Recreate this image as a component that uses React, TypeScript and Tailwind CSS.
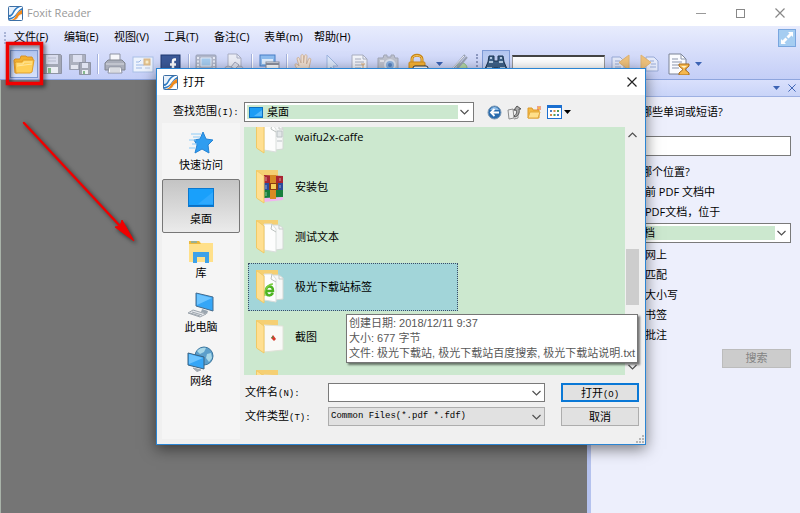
import type { ReactNode } from 'react';
import clsx from 'clsx';

const MONO = "font-['Liberation_Mono','Noto_Sans_CJK_SC',monospace] text-[9px]";

function BrandIcon() {
  return (
    <svg width="15" height="15" viewBox="0 0 15 15" aria-hidden="true">
      <rect x="0.5" y="0.5" width="14" height="14" rx="1" fill="#e9f1fa" stroke="#3c6fa5" />
      <path d="M1 14V9c4 0 3-5 8-8h5v3c-6 1-4 8-13 10z" fill="#2f7cc4" />
      <path d="M1 11c5 0 4-7 11-10h2v1C8 5 9 11 1 12z" fill="#fff" />
      <path d="M3 14c6-1 3-7 11-10v4c-5 1-3 5-8 6z" fill="#f18a1c" />
      <path d="M8 14c3-1 3-4 6-5v5z" fill="#fff" />
    </svg>
  );
}

function Chevron({ up = false }: { up?: boolean }) {
  return (
    <svg width="9" height="6" viewBox="0 0 9 6" fill="none" stroke="#505050" strokeWidth="1.2" aria-hidden="true">
      <path d={up ? 'M0.5 5 4.5 1l4 4' : 'M0.5 1l4 4 4-4'} />
    </svg>
  );
}

function Caret({ color = '#3c63b4' }: { color?: string }) {
  return (
    <svg width="7" height="4" viewBox="0 0 7 4" aria-hidden="true">
      <path d="M0 0h7L3.5 4z" fill={color} />
    </svg>
  );
}

function Cross({ color, size = 10 }: { color: string; size?: number }) {
  return (
    <svg width={size} height={size} viewBox="0 0 10 10" stroke={color} strokeWidth="1.2" aria-hidden="true">
      <path d="M0.5 0.5l9 9M9.5 0.5l-9 9" />
    </svg>
  );
}

function Svg({ children, w = 22, h = 22 }: { children: ReactNode; w?: number; h?: number }) {
  return (
    <svg width={w} height={h} viewBox={`0 0 ${w} ${h}`} fill="none" aria-hidden="true">
      {children}
    </svg>
  );
}

const icons = {
  open: (
    <Svg>
      <path d="M1 8V7l1-1h5l1-3h5l1 1h5l1 2v4L4 20H2z" fill="#f3b02e" stroke="#d9912a" />
      <path d="M3 20 2 10l1-1h6l1-2h11l-2 12-2 1z" fill="#ffcf57" stroke="#e09f2c" />
      <path d="M4 11h6l1-2h8M4 13l15-2" stroke="#ffe79c" />
    </Svg>
  ),
  save: (
    <Svg>
      <path d="M1.500 1.500h18l1 1v18H2.500l-1-1z" fill="#a3a7b5" stroke="#8e93a4" />
      <path d="M5 2h12v9H5z" fill="#d9dced" />
      <path d="M7 5h8M7 8h8" stroke="#b6bbce" />
      <path d="M6 14h11v6H6z" fill="#eceef5" />
      <path d="M7 15h3v5H7z" fill="#86b98e" />
    </Svg>
  ),
  saveAll: (
    <Svg>
      <path d="M0.500 1.500h16v15h-16z" fill="#adb1bf" stroke="#999eb0" />
      <path d="M4 2h9v7H4z" fill="#dde0f0" />
      <path d="M2 12h7v4H2z" fill="#e4e6f0" />
      <path d="M10.500 9.500h11v12h-11z" fill="#a3a7b5" stroke="#8e93a4" />
      <path d="M13 10h6v5h-6z" fill="#dfe2f0" />
      <path d="M13 17h6v4h-6z" fill="#eceef5" />
      <path d="M14 18h2v3h-2z" fill="#86b98e" />
    </Svg>
  ),
  print: (
    <Svg>
      <path d="M6 1h10v8H6z" fill="#f7f8fb" stroke="#8e93a2" />
      <path d="M1 10l3-3h14l3 3v7H1z" fill="#a9adb9" stroke="#80858f" />
      <path d="M2 11h18" stroke="#d9dbe2" />
      <path d="M5 14h12l1 6H4z" fill="#fff" stroke="#8e93a2" />
      <path d="M6 16h10M6 18h10" stroke="#b4b8c4" />
    </Svg>
  ),
  mail: (
    <Svg>
      <rect x="1" y="4" width="20" height="15" fill="#edf3fd" stroke="#a9bfe6" />
      <path d="M4 9h3l2-2M4 12h8M4 15h6" stroke="#9db9e6" />
      <rect x="12" y="6" width="6" height="6" fill="#e5c58e" stroke="#d5b48a" />
      <circle cx="15" cy="9" r="1.500" fill="#f7eccd" />
      <path d="M13 15h5" stroke="#b7c6e0" />
    </Svg>
  ),
  facebook: (
    <Svg>
      <rect x="1" y="2" width="19" height="19" fill="#3b5998" stroke="#1f3870" />
      <path d="M2 16h17v4H2z" fill="#6d84b4" />
      <path d="M16 6.500h-1.500c-1.200 0-1.500.8-1.500 2V20M10 11.500h6" stroke="#fff" strokeWidth="2.500" />
    </Svg>
  ),
  film: (
    <Svg>
      <rect x="1" y="2" width="20" height="14" rx="1" fill="#b3b9cc" stroke="#99a1b8" />
      <path d="M6 5h10v8H6z" fill="#a6cdf0" stroke="#e3ecfa" />
      <path d="M3 4v11M19 4v11" stroke="#e8ebf6" strokeWidth="2" strokeDasharray="2 1.500" />
    </Svg>
  ),
  sign: (
    <Svg>
      <path d="M5 1h9l4 4v16H5z" fill="#eceef7" stroke="#a9aec4" />
      <path d="M14 1v4h4" stroke="#a9aec4" />
      <path d="M1 17c0-4 6-5 8-2h4c3-4 8-1 8 2l-4 3-5-3h-3l-4 3z" fill="#c9cddd" stroke="#a0a5ba" />
      <path d="M8 14l4-5 4 3-4 4z" fill="#dfe2ee" stroke="#a0a5ba" />
    </Svg>
  ),
  windows: (
    <Svg>
      <rect x="2" y="2" width="15" height="11" fill="#8ebdf0" stroke="#487fc5" />
      <path d="M4 6h11v5H4z" fill="#e1eefe" />
      <rect x="8" y="9" width="13" height="10" fill="#fbfcff" stroke="#8b919f" />
      <path d="M8 11h13" stroke="#8b919f" strokeWidth="2" />
    </Svg>
  ),
  hand: (
    <Svg>
      <path
        d="M7 20c-1-3-5-6-5-8s2-1.500 4 1L4 6c0-2 2-2 2.500-.5L8 10V3c0-2 2.500-2 2.500 0v7l1-7c.3-2 2.500-1.500 2.500 0l-.5 8 2-5c.7-1.500 2.500-1 2.300.8L16 15l-2 5z"
        fill="#f1e0d2"
        stroke="#cfb59f"
      />
    </Svg>
  ),
  cursor: (
    <Svg>
      <path d="M6 2v16l4-4 3 6 2-1-3-6h5z" fill="#dce7fa" stroke="#9db4de" />
    </Svg>
  ),
  selectText: (
    <Svg>
      <path d="M3 2h11l4 4v15H3z" fill="#f3f5fb" stroke="#a9aec0" />
      <path d="M14 2v4h4M6 6h6M6 9h9M6 12h9M6 15h6" stroke="#a9aec0" />
      <path d="M12 11h4M14 11v7" stroke="#d8ac78" />
    </Svg>
  ),
  camera: (
    <Svg>
      <path d="M1 5h5l1-3h3v2h4V2h3l1 3h3v14H1z" fill="#bfc3cf" stroke="#a2a7b7" />
      <circle cx="13" cy="12" r="5" fill="#8eb3e0" stroke="#dbe2ef" strokeWidth="2" />
      <circle cx="13" cy="12" r="2" fill="#5783c0" />
      <path d="M3 8h4" stroke="#e2e4ec" strokeWidth="2" />
    </Svg>
  ),
  lock: (
    <Svg>
      <path d="M5 10V6c0-5 10-5 10 0v4" stroke="#c98718" strokeWidth="3" />
      <path d="M5 10V6c0-4.500 10-4.500 10 0v4" stroke="#ffcf62" />
      <rect x="2" y="9" width="16" height="11" rx="1" fill="#f7b233" stroke="#cf8b1d" />
      <rect x="6" y="13" width="15" height="8" rx="2" fill="#fff" stroke="#333" />
      <path d="M8 16h11M8 19h11" stroke="#444" strokeWidth="2" strokeDasharray="2 1" />
    </Svg>
  ),
  pen: (
    <Svg>
      <circle cx="15" cy="15" r="5" fill="#b5d8aa" stroke="#93bb87" />
      <path d="M3 19 18 2M7 19 20 4" stroke="#9aa2b4" strokeWidth="2" />
      <path d="M4 17 17 3" stroke="#eef1f8" />
    </Svg>
  ),
  find: (
    <Svg w={24}>
      <path d="M5 3h5v5h4V3h5l1 6 3 7v5h-9v-6h-4v6H1v-5l3-7z" fill="#3e6289" stroke="#1d3552" />
      <path d="M6 5h2M16 5h2M5 9h4M15 9h4M3 15h5M16 15h5" stroke="#b6cde4" strokeWidth="2" />
    </Svg>
  ),
  prev: (
    <Svg>
      <path d="M2 4h8l4 4v11H2z" fill="#e5eafa" stroke="#99abd7" />
      <path d="M5 8h5M5 11h4M5 14h6" stroke="#99abd7" />
      <path d="M19 2v15l-10-7.500z" fill="#efc27b" stroke="#e0b473" />
    </Svg>
  ),
  next: (
    <Svg>
      <path d="M8 4h8l4 4v10H8z" fill="#e5eafa" stroke="#99abd7" />
      <path d="M12 8h4M13 11h5M12 14h6" stroke="#99abd7" />
      <path d="M3 2v15l10-7.500z" fill="#efc27b" stroke="#e0b473" />
    </Svg>
  ),
  hourglass: (
    <Svg>
      <path d="M1 1h12l5 5v15H1z" fill="#fbfcff" stroke="#7a8295" />
      <path d="M13 1v5h5M4 6h6M4 9h10M4 12h8M4 15h7" stroke="#8b95ab" />
      <path d="M11 11h10v2l-4 3.500 4 3.500v2H11v-2l4-3.500-4-3.500z" fill="#f5b74e" stroke="#a76a1b" />
      <path d="M13 13h6l-3 2z" fill="#fff2c8" />
    </Svg>
  ),
};

function ToolButton({ name, label, active = false }: { name: keyof typeof icons; label: string; active?: boolean }) {
  return (
    <button
      aria-label={label}
      className={clsx(
        'flex h-7 w-7 shrink-0 items-center justify-center',
        active && 'border border-[#7f9bd6] bg-linear-to-b from-[#b3c6f1] to-[#d6e1fb]',
      )}
    >
      {icons[name]}
    </button>
  );
}

function Separator() {
  return (
    <div className="flex w-[7px] shrink-0 justify-center">
      <div className="h-5 w-[2px] border-l border-[#a5b2dd] bg-white" />
    </div>
  );
}

const menus = ['文件(F)', '编辑(E)', '视图(V)', '工具(T)', '备注(C)', '表单(m)', '帮助(H)'];

function TitleBar() {
  return (
    <header className="flex h-[26px] items-center bg-white pl-2 pr-[15px]">
      <BrandIcon />
      <h1 className="ml-1 flex-1 text-[11px] text-[#999]">Foxit Reader</h1>
      <div className="flex items-center gap-[30px]">
        <button aria-label="最小化" className="flex h-4 w-[10px] items-center">
          <span className="h-px w-full bg-[#999]" />
        </button>
        <button aria-label="最大化" className="h-[9px] w-[9px] border border-[#888]" />
        <button aria-label="关闭">
          <Cross color="#888" />
        </button>
      </div>
    </header>
  );
}

function Toolbar() {
  return (
    <div className="border-b border-[#8ea5de] bg-linear-to-b from-[#e8ecfd] to-[#c4cef7]">
      <div className="flex h-[23px] items-center px-1">
        <div className="mr-[6px] h-3 border-l-2 border-dotted border-[#a9b4d6]" />
        <nav className="flex flex-1">
          {menus.map((menu) => (
            <button key={menu} className="w-[50px] pl-[2px] text-left">
              {menu}
            </button>
          ))}
        </nav>
        <button aria-label="全屏" className="h-[18px] w-[18px]">
          <Svg w={18} h={18}>
            <rect x="0.5" y="0.5" width="17" height="17" fill="#a5cdf1" stroke="#79a6df" />
            <path d="M10 3h5v5l-1.500-1.500-3 3-2-2 3-3zM3 10l1.500 1.500 3-3 2 2-3 3L8 15H3z" fill="#fff" />
          </Svg>
        </button>
      </div>
      <div className="flex h-[30px] items-center pl-[10px]">
        <ToolButton name="open" label="打开" active />
        <ToolButton name="save" label="保存" />
        <ToolButton name="saveAll" label="另存为" />
        <Separator />
        <ToolButton name="print" label="打印" />
        <ToolButton name="mail" label="邮件" />
        <ToolButton name="facebook" label="Facebook" />
        <Separator />
        <ToolButton name="film" label="多媒体" />
        <ToolButton name="sign" label="签名" />
        <Separator />
        <ToolButton name="windows" label="窗口" />
        <Separator />
        <ToolButton name="hand" label="手型工具" />
        <ToolButton name="cursor" label="选择" />
        <ToolButton name="selectText" label="选择文本" />
        <ToolButton name="camera" label="快照" />
        <div className="flex w-8 justify-center">
          <ToolButton name="lock" label="加密" />
        </div>
        <button aria-label="更多加密" className="flex w-[10px] justify-center">
          <Caret />
        </button>
        <ToolButton name="pen" label="铅笔" />
        <div className="flex w-[10px] justify-center">
          <div className="h-5 border-l-2 border-dotted border-[#8c98c0]" />
        </div>
        <ToolButton name="find" label="查找" active />
        <input
          aria-label="查找内容"
          className="ml-[2px] mr-[2px] h-[18px] w-[93px] border border-t-2 border-[#999] border-t-[#444] bg-white"
        />
        <ToolButton name="prev" label="上一个" />
        <ToolButton name="next" label="下一个" />
        <div className="flex w-[30px] justify-end">
          <ToolButton name="hourglass" label="搜索文档" />
        </div>
        <button aria-label="更多搜索" className="flex w-[10px] justify-center">
          <Caret />
        </button>
      </div>
    </div>
  );
}

interface ComboProps {
  label: string;
  value: string;
  selectClass: string;
  children?: ReactNode;
}

function Combo({ label, value, selectClass, children }: ComboProps) {
  return (
    <div className="relative flex h-5 w-full items-center border border-[#7a7a7a] bg-white p-[2px]">
      {children}
      <select
        aria-label={label}
        className={clsx('h-full min-w-0 flex-1 appearance-none bg-[#cce8cf] leading-[14px]', selectClass)}
      >
        <option>{value}</option>
      </select>
      <span className="flex w-[13px] justify-center">
        <Chevron />
      </span>
    </div>
  );
}

const searchScopes = ['前 PDF 文档中', 'PDF文档，位于'];
const searchOptions = ['网上', '匹配', '大小写', '书签', '批注'];

function SearchPanel() {
  return (
    <aside className="w-[213px] shrink-0 border-l-4 border-[#b5c2ee] bg-[#edeffc]">
      <div className="flex h-[17px] items-center justify-end gap-2 border-b border-[#9db0e2] bg-linear-to-b from-[#d9e0fc] to-[#c9d4f8] pr-1">
        <button aria-label="面板菜单">
          <Caret />
        </button>
        <button aria-label="关闭面板">
          <Cross color="#3c63b4" size={8} />
        </button>
      </div>
      <div className="flex flex-col pl-2 pr-[9px] pt-[5px]">
        <label htmlFor="phrase" className="h-5 pl-[42px] leading-5">
          哪些单词或短语?
        </label>
        <input id="phrase" className="mt-[14px] h-5 border border-[#7a7a7a] bg-white" />
        <p className="mt-[6px] h-5 pl-[42px] leading-5">哪个位置?</p>
        {searchScopes.map((scope) => (
          <label key={scope} className="flex h-5 items-center">
            <input type="radio" name="scope" className="mr-[34px] h-3 w-3" />
            {scope}
          </label>
        ))}
        <div className="mt-px">
          <Combo label="位于" value="档" selectClass="pl-[42px]" />
        </div>
        <div className="mt-[2px]">
          {searchOptions.map((option) => (
            <label key={option} className="flex h-5 items-center">
              <input type="checkbox" className="mr-[34px] h-3 w-3" />
              {option}
            </label>
          ))}
        </div>
        <button className="mt-1 h-[19px] w-[69px] self-end border border-[#bcbcbc] bg-[#ccc] text-[#838383]">搜索</button>
      </div>
    </aside>
  );
}

const places = [
  {
    name: '快速访问',
    icon: (
      <Svg w={26} h={26}>
        <path d="M15 2l3 7 7 1-5 5 1 8-7-4-7 4 2-8-3-5 6-1z" fill="#2f9df0" stroke="#2583d4" />
        <path d="M3 4h10M5 7h7M1 10h7M4 14h5M1 18h6" stroke="#8ccbf7" />
      </Svg>
    ),
  },
  {
    name: '桌面',
    icon: (
      <Svg w={26} h={26}>
        <rect x="0.5" y="4.500" width="25" height="18" fill="#19a0fb" stroke="#0b78cf" />
        <path d="M1 21h24v1H1z" fill="#0c6fc2" />
        <path d="M10 20 25 8v12z" fill="#2fa9fe" />
      </Svg>
    ),
  },
  {
    name: '库',
    icon: (
      <Svg w={26} h={26}>
        <path d="M1 3h10l2 2h12v19H1z" fill="#ffe08a" />
        <path d="M1 3h10l2 3H1z" fill="#eab83c" />
        <path d="M3 4h6" stroke="#4ba8e8" />
        <path d="M5 14h16v11h-4v-6H9v6H5z" fill="#3da2ea" />
      </Svg>
    ),
  },
  {
    name: '此电脑',
    icon: (
      <Svg w={28} h={26}>
        <path d="M9 1l17 4v14L9 14z" fill="#35a6f7" stroke="#456b8c" />
        <path d="M10 2l15 4-15 7z" fill="#6cc4ff" />
        <path d="M15 17l6 2-1 3-6-2z" fill="#9aa5af" />
        <path d="M6 18l13 4-6 3-12-4z" fill="#e6e9ed" stroke="#9da5ad" />
        <path d="M5 20l10 3M3 21l10 3" stroke="#9da5ad" />
      </Svg>
    ),
  },
  {
    name: '网络',
    icon: (
      <Svg w={28} h={26}>
        <circle cx="17" cy="10" r="9" fill="#5c9fcb" stroke="#3a769e" />
        <path d="M10 5c2-3 7-4 9-3l-2 4-4 2zM20 8l4-1 1 5-3 4-3-4z" fill="#a9d8e8" />
        <path d="M1 7l16 4v12L1 19z" fill="#35a6f7" stroke="#3a607e" />
        <path d="M2 8l14 4-14 6z" fill="#6cc4ff" />
        <path d="M6 22l8 2-4 1.500z" fill="#a0a8b0" stroke="#a0a8b0" />
      </Svg>
    ),
  },
];

type FolderKind = 'preview' | 'archive' | 'pages' | 'web' | 'picture';

function FolderIcon({ kind }: { kind: FolderKind }) {
  return (
    <svg width="28" height="36" viewBox="0 0 28 36" fill="none" aria-hidden="true">
      <path d="M0 1h22v8H8v22z" fill="#f5cf73" />
      {kind === 'picture' && (
        <>
          <path d="M8 6l19 1v24L8 33z" fill="#f9f9f7" stroke="#dfe2d8" />
          <path d="M15 19l2-3 3 4-2 2z" fill="#d43a2c" />
          <path d="M15 19l2-2v2z" fill="#3a9c4a" />
        </>
      )}
      {kind === 'archive' && (
        <>
          <path d="M8 6l19 1v7H8z" fill="#a92532" />
          <path d="M8 14h19v8H8z" fill="#2b4a9c" />
          <path d="M8 21h19v7L8 30z" fill="#16803d" />
          <path d="M8 29l19-1v3L8 33z" fill="#f0b5f0" />
          <path d="M14 6h6v24h-6z" fill="#d88a24" />
          <path d="M13 14h9v7h-9z" fill="#8c3b12" />
          <path d="M15 15h5v5h-5z" fill="#f6cf58" />
          <path d="M10 8v4M24 9v3M10 16v4M24 16v3M10 23v4" stroke="#ffffff44" strokeWidth="2" />
        </>
      )}
      {(kind === 'preview' || kind === 'pages' || kind === 'web') && (
        <>
          <path d="M16 6h7l4 3v21l-8 1z" fill="#f7f8f8" stroke="#d3d8d5" />
          <path d="M23 6v4h4" stroke="#c5cbc8" />
          <path d="M8 5h8l4 5v23L8 31z" fill="#fdfdfd" stroke="#dadedc" />
          <path d="M16 5l-1 5 5 3" stroke="#bcc2bf" />
        </>
      )}
      {kind === 'preview' && <path d="M21 12h5v6h-5zM21 22h5" fill="#e3e7e8" stroke="#bcc2c5" />}
      {kind === 'web' && (
        <>
          <path d="M10 22h7c0-6-7-6-7 0s5 5 7 2" stroke="#4db421" strokeWidth="2.500" />
          <path d="M9 27c-2-5 3-12 8-12" stroke="#77cc3e" strokeWidth="1.500" />
        </>
      )}
      <path d="M0.500 1.500 8 7v27l-7.500-5z" fill="#ffdf91" stroke="#f0c965" />
    </svg>
  );
}

const folders: { name: string; kind: FolderKind }[] = [
  { name: 'waifu2x-caffe', kind: 'preview' },
  { name: '安装包', kind: 'archive' },
  { name: '测试文本', kind: 'pages' },
  { name: '极光下载站标签', kind: 'web' },
  { name: '截图', kind: 'picture' },
  { name: '', kind: 'picture' },
];

function DesktopGlyph() {
  return (
    <Svg w={14} h={11}>
      <rect x="0.5" y="0.5" width="13" height="10" fill="#1b9df5" stroke="#0b6fc0" />
      <path d="M5 9l8-6v6z" fill="#52b9fb" />
    </Svg>
  );
}

function LookInTools() {
  return (
    <div className="ml-[13px] flex items-center gap-[5px]">
      <button aria-label="后退">
        <Svg w={15} h={15}>
          <circle cx="7.500" cy="7.500" r="6.500" fill="#2a6cae" stroke="#7b98b5" />
          <path d="M3 5c2-4 7-4 9 0z" fill="#8fbce6" />
          <path d="M12 7.500H4M7.500 4 4 7.500 7.500 11" stroke="#fff" strokeWidth="1.800" />
        </Svg>
      </button>
      <button aria-label="向上一级">
        <Svg w={15} h={15}>
          <path d="M1 5l5-1 1 9-5 1zM6 5h5v8l-4 1" fill="#eee" stroke="#8c8c8c" />
          <path d="M7 11c3-2 3-4 2-6H7l3-4 4 3h-2c1 4-1 7-4 8z" fill="#aaa" stroke="#555" />
        </Svg>
      </button>
      <button aria-label="新建文件夹">
        <Svg w={15} h={15}>
          <path d="M1 3h4l1 2h6v8H1z" fill="#f4b942" stroke="#dc9a2a" />
          <path d="M1 13l2-6h10l-2 6z" fill="#ffe08b" stroke="#e3a93c" />
          <path d="M12 1v4M10 3h4M10.500 1.500l3 3M13.500 1.500l-3 3" stroke="#e8542a" />
          <circle cx="12" cy="3" r="1" fill="#ffd94e" />
        </Svg>
      </button>
      <button aria-label="查看菜单" className="flex items-center gap-[2px]">
        <Svg w={15} h={14}>
          <rect x="0.500" y="0.500" width="14" height="13" fill="#fff" stroke="#1b6fd0" />
          <path d="M0 1.500h15" stroke="#1b6fd0" strokeWidth="3" />
          <path d="M3 5h2v2H3zM10 9h2v2h-2z" fill="#4b7fc0" />
          <path d="M6.500 5h2v2h-2zM3 9h2v2H3z" fill="#d88b4a" />
          <path d="M10 5h2v2h-2zM6.500 9h2v2h-2z" fill="#4b9c57" />
        </Svg>
        <Caret color="#000" />
      </button>
    </div>
  );
}

function FileList() {
  return (
    <div className="flex h-[248px]">
      <ul className="flex-1 overflow-hidden bg-[#cce8cf] pl-1">
        {folders.map((folder, i) => (
          <li key={i} className={clsx('h-[50px] py-px', i === 0 && '-mt-[15px]')}>
            <button
              aria-label={folder.name || '文件夹'}
              className={clsx(
                'flex h-12 w-[210px] items-center gap-[11px] pl-2 text-left',
                folder.kind === 'web' && 'border border-dotted border-[#3c4b66] bg-[#a2d5d9] pl-[7px]',
              )}
            >
              <FolderIcon kind={folder.kind} />
              {folder.name}
            </button>
          </li>
        ))}
      </ul>
      <div className="flex w-[14px] flex-col items-center pl-px">
        <button aria-label="向上滚动" className="flex h-4 items-center">
          <Chevron up />
        </button>
        <div className="mt-[106px] h-14 w-full bg-[#cdcdcd]" />
        <button aria-label="向下滚动" className="mt-auto flex h-4 items-center">
          <Chevron />
        </button>
      </div>
    </div>
  );
}

function OpenDialog() {
  return (
    <section
      role="dialog"
      aria-label="打开"
      className="absolute left-[156px] top-[68px] w-[490px] border border-[#2b85d3] bg-[#f0f0f0] shadow-[0_4px_14px_rgba(0,0,0,0.5)]"
    >
      <div className="flex h-[26px] items-center bg-white pl-[6px] pr-2">
        <BrandIcon />
        <h2 className="ml-[5px] flex-1">打开</h2>
        <button aria-label="关闭对话框">
          <Cross color="#222" />
        </button>
      </div>
      <div className="pb-[5px] pl-[5px] pr-[6px] pt-[7px]">
        <div className="flex h-5 items-center">
          <span className="w-[82px] pl-[11px] leading-4">
            查找范围<span className={MONO}>(I):</span>
          </span>
          <div className="w-[230px]">
            <Combo label="查找范围" value="桌面" selectClass="pl-5">
              <span className="absolute left-1">
                <DesktopGlyph />
              </span>
            </Combo>
          </div>
          <LookInTools />
        </div>
        <div className="mt-px flex">
          <div className="mr-1 flex w-[78px] flex-col bg-[#f5f5f5] pt-[2px]">
            {places.map((place) => (
              <button
                key={place.name}
                className={clsx(
                  'flex h-[54px] flex-col items-center border pt-1',
                  place.name === '桌面'
                    ? 'rounded-[2px] border-[#777] bg-linear-to-b from-[#c4c4c4] to-[#ebebeb]'
                    : 'border-transparent',
                )}
              >
                {place.icon}
                <span className="leading-[18px]">{place.name}</span>
              </button>
            ))}
          </div>
          <div className="flex-1 pt-1">
            <FileList />
            <div className="mt-2 flex h-[19px] items-center">
              <label htmlFor="file-name" className="w-[84px] pl-px">
                文件名<span className={MONO}>(N):</span>
              </label>
              <div className="mr-4 flex h-full flex-1 items-center border border-[#7a7a7a] bg-white pr-[3px]">
                <input id="file-name" className="min-w-0 flex-1 bg-white px-1 outline-none" />
                <Chevron />
              </div>
              <button className="h-full w-[78px] border-2 border-[#0a78d6] bg-[#e1e1e1] leading-[15px]">
                打开<span className={MONO}>(O)</span>
              </button>
            </div>
            <div className="mb-[13px] mt-[5px] flex h-[19px] items-center">
              <label htmlFor="file-type" className="w-[84px] pl-px">
                文件类型<span className={MONO}>(T):</span>
              </label>
              <div className="mr-4 flex h-full flex-1 items-center border border-[#adadad] bg-[#e1e1e1] pr-[3px]">
                <select
                  id="file-type"
                  className="h-full min-w-0 flex-1 appearance-none pl-[2px] font-['Liberation_Mono',monospace] text-[9px]"
                >
                  <option>Common Files(*.pdf *.fdf)</option>
                </select>
                <Chevron />
              </div>
              <button className="h-full w-[78px] border border-[#adadad] bg-[#e1e1e1] leading-[16px]">取消</button>
            </div>
          </div>
        </div>
      </div>
      <svg className="absolute bottom-px right-px" width="8" height="8" viewBox="0 0 8 8" fill="#b5b5b5" aria-hidden="true">
        <path d="M6 0h2v2H6zM3 3h2v2H3zM6 3h2v2H6zM0 6h2v2H0zM3 6h2v2H3zM6 6h2v2H6z" />
      </svg>
      <div
        role="tooltip"
        className="absolute left-[189px] top-[245px] whitespace-nowrap border border-[#767676] bg-white px-[2px] py-px font-['Liberation_Sans','Noto_Sans_CJK_SC',sans-serif] leading-[15px] text-[#575757] shadow-[2px_2px_2px_rgba(0,0,0,0.5)]"
      >
        <p>创建日期: 2018/12/11 9:37</p>
        <p>大小: 677 字节</p>
        <p>文件: 极光下载站, 极光下载站百度搜索, 极光下载站说明.txt</p>
      </div>
    </section>
  );
}

function Annotations() {
  return (
    <svg
      className="pointer-events-none absolute left-0 top-0 drop-shadow-[2px_2px_2px_rgba(0,0,0,0.6)]"
      width="150"
      height="260"
      viewBox="0 0 150 260"
      aria-hidden="true"
    >
      <rect x="7.500" y="43.500" width="34" height="40" fill="none" stroke="#f00000" strokeWidth="3.500" />
      <path d="M24 123 120 226" stroke="#f00000" strokeWidth="2.500" strokeLinecap="round" />
      <path d="M134 241 115 227 120 226 122 220z" fill="#f00000" stroke="#f00000" />
    </svg>
  );
}

export default function App() {
  return (
    <div className="relative flex min-h-screen flex-col overflow-hidden font-['Open_Sans','Noto_Sans_CJK_SC',sans-serif] text-[11px] text-black">
      <TitleBar />
      <Toolbar />
      <div className="flex flex-1">
        <main className="flex-1 border-l border-[#a9b3a9] bg-[#757575]" />
        <SearchPanel />
      </div>
      <OpenDialog />
      <Annotations />
    </div>
  );
}
